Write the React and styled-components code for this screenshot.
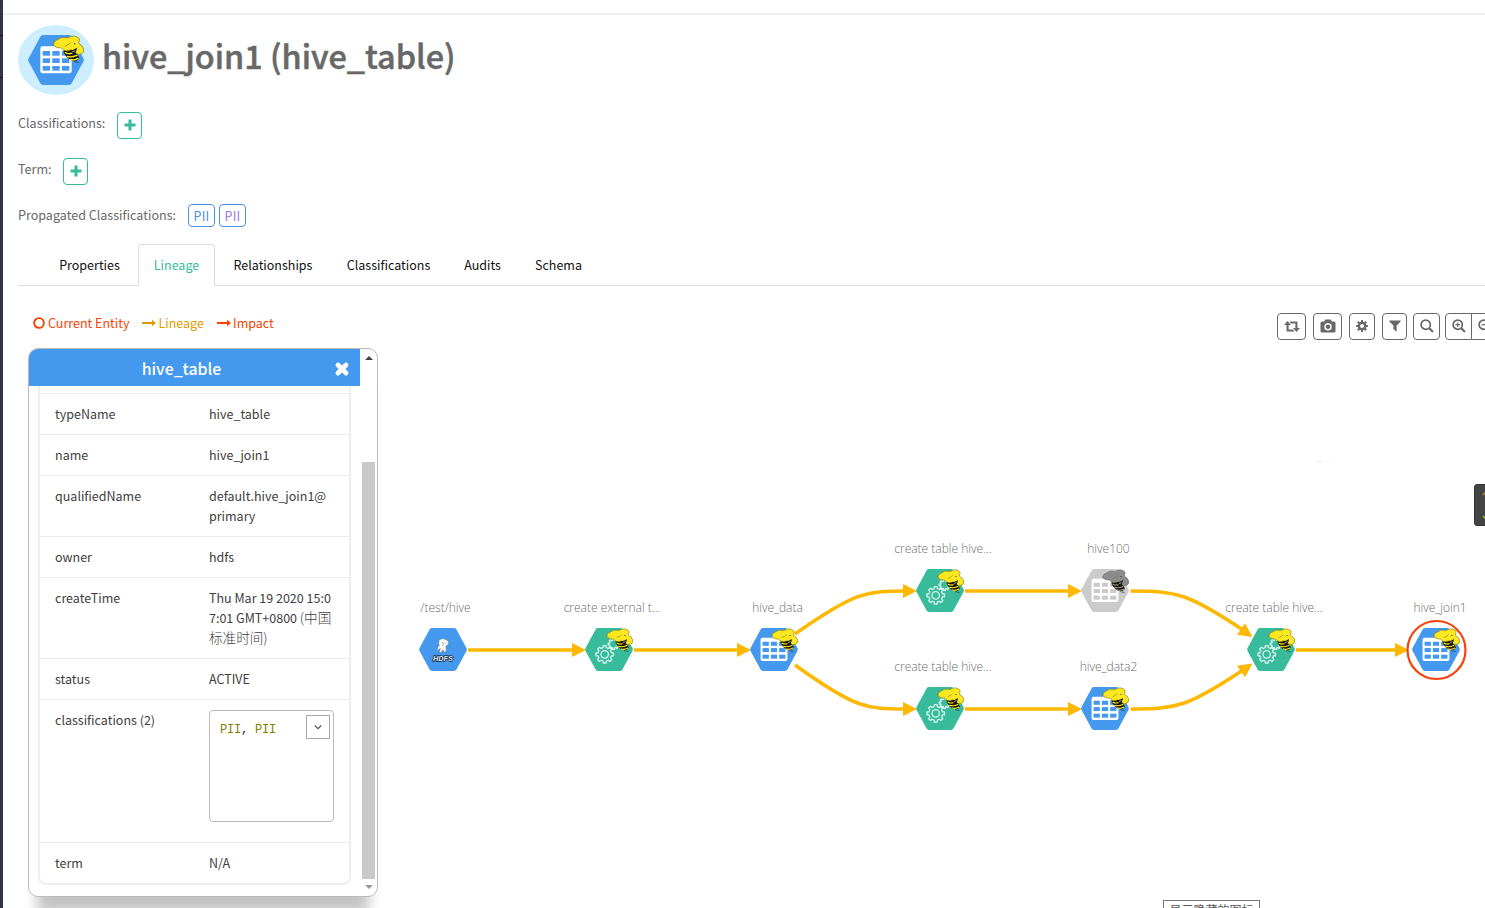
import React from 'react';
import styled, { createGlobalStyle, css } from 'styled-components';

const sans = `"Noto Sans CJK SC", "Noto Sans", sans-serif`;
const light = `"Open Sans", "Noto Sans", sans-serif`;

const GlobalStyle = createGlobalStyle`
  *, *::before, *::after { box-sizing: border-box; }
  body { margin: 0; background: #fff; overflow: hidden; }
`;

const Page = styled.div`
  position: relative;
  display: flex;
  width: 1485px;
  height: 908px;
  overflow: hidden;
  background: #fff;
  font: 13px/20px ${sans};
  color: #686868;
`;
const Sidebar = styled.div`
  flex: none;
  width: 3px;
  background: linear-gradient(#323544 35px, #15161d 35px 36px, #323544 36px 77px, #15161d 77px 78px, #323544 78px);
`;
const Main = styled.main`
  flex: 1;
  min-width: 0;
  display: flex;
  flex-direction: column;
  padding-top: 13px;
`;
const TopRule = styled.div`
  height: 2px;
  background: #eee;
`;
const Header = styled.header`
  display: flex;
  height: 80px;
  padding: 10px 0 0 15px;
`;
const EntityBadge = styled.div`
  display: flex;
  align-items: center;
  justify-content: center;
  width: 76px;
  height: 70px;
  border-radius: 50%;
  background: #cef;
`;
const Title = styled.h1`
  margin: 5px 0 0 8px;
  font: 500 32.4px/50px ${sans};
  -webkit-text-stroke: 0.5px #686868;
  color: #686868;
  white-space: nowrap;
`;
const TagRow = styled.div`
  display: flex;
  align-items: flex-start;
  height: 46px;
  padding: 17px 0 0 15px;
`;
const TagLabel = styled.span`
  width: ${p => p.$w}px;
  height: 20px;
  margin-top: 1px;
  line-height: 20px;
  font-size: 12.55px;
  white-space: nowrap;
`;
const AddButton = styled.button`
  display: flex;
  align-items: center;
  justify-content: center;
  width: 25px;
  height: 27px;
  padding: 0 0 2px 1px;
  border: 1px solid #37bb9b;
  border-radius: 4px;
  background: #fff;
`;
const Tag = styled.span`
  display: flex;
  align-items: center;
  justify-content: center;
  width: 27px;
  height: 23px;
  margin-right: 4px;
  border: 1px solid #4a90e2;
  border-radius: 4px;
  font-size: 12.5px;
  letter-spacing: 0.3px;
  color: ${p => p.$color};
`;
const Tabs = styled.nav`
  display: flex;
  height: 42px;
  margin: 11px 0 0 15px;
  padding-left: 25px;
  border-bottom: 1px solid #ddd;
`;
const Tab = styled.a`
  flex: none;
  width: ${p => p.$w}px;
  height: 42px;
  margin-right: 2px;
  border: 1px solid transparent;
  border-radius: 4px 4px 0 0;
  text-align: center;
  line-height: 39px;
  font-size: 12.5px;
  white-space: nowrap;
  color: #111;
  ${p => p.$active && css`
    color: #37bb9b;
    background: #fff;
    border-color: #ddd #ddd #fff;
  `}
`;
const LineageBar = styled.div`
  display: flex;
  justify-content: space-between;
  align-items: flex-start;
  height: 62px;
  padding: 27px 0 0 30px;
`;
const Legend = styled.div`
  display: flex;
`;
const LegendItem = styled.span`
  display: flex;
  align-items: center;
  height: 20px;
  width: ${p => p.$w}px;
  gap: ${p => p.$gap || 3}px;
  font-size: 12.5px;
  white-space: nowrap;
  color: ${p => p.$color};
`;
const Toolbar = styled.div`
  display: flex;
  width: 208px;
  overflow: hidden;
`;
const ToolButton = styled.button`
  flex: none;
  display: flex;
  align-items: center;
  justify-content: center;
  width: ${p => p.$w}px;
  height: 27px;
  margin-right: ${p => p.$gap}px;
  padding: 0 0 1px;
  border: 1px solid #686868;
  border-radius: ${p => p.$radius || '4px'};
  background: #fff;
  color: #686868;
`;
const Workspace = styled.section`
  display: flex;
  height: 560px;
  padding-left: 25px;
`;
const Panel = styled.aside`
  flex: none;
  display: flex;
  width: 350px;
  height: 549px;
  border: 1px solid #bbb;
  border-radius: 10px;
  overflow: hidden;
  background: #fff;
  box-shadow: 0 25px 13px -9px #c4c4c4;
`;
const PanelMain = styled.div`
  width: 331px;
`;
const PanelHeader = styled.div`
  display: flex;
  align-items: center;
  height: 37px;
  padding: 2px 10px 0 0;
  background: #4499ee;
  color: #fff;
  font: 500 15.9px/37px ${sans};
`;
const PanelTitle = styled.span`
  flex: 1;
  text-align: center;
  white-space: nowrap;
`;
const Details = styled.div`
  width: 313px;
  height: 499px;
  margin-left: 9px;
  padding-top: 7px;
  border: 2px solid #eee;
  border-top: 0;
  border-radius: 0 0 8px 8px;
`;
const DetailRow = styled.div`
  display: flex;
  height: ${p => p.$h}px;
  padding: 10px 15px 0;
  border-top: 1px solid #ebebeb;
  font-size: 12.5px;
  color: #404040;
`;
const DetailKey = styled.div`
  flex: none;
  width: 154px;
`;
const DetailValue = styled.div`
  flex: none;
  width: 124px;
  word-break: break-all;
`;
const Cjk = styled.span`
  font-weight: 300;
  font-size: 13.6px;
  line-height: 1;
`;
const CodeBox = styled.div`
  display: flex;
  justify-content: space-between;
  width: 125px;
  height: 112px;
  padding: 4px 3px 0 10px;
  border: 1px solid #bbb;
  border-radius: 4px;
  font: 12px/31px "Liberation Mono", monospace;
  letter-spacing: -0.2px;
  color: #222;
  white-space: pre;
`;
const CodeTag = styled.span`
  color: #808000;
`;
const Expander = styled.span`
  display: flex;
  align-items: center;
  justify-content: center;
  width: 24px;
  height: 24px;
  border: 1px solid #aaa;
`;
const Scrollbar = styled.div`
  display: flex;
  flex-direction: column;
  align-items: center;
  justify-content: space-between;
  width: 17px;
  padding: 6px 0 6px;
`;
const Thumb = styled.div`
  width: 13px;
  height: 417px;
  margin-top: 96px;
  background: #c9c9c9;
`;
const Canvas = styled.div`
  position: relative;
  flex: 1;
  min-width: 0;
  overflow: hidden;
`;
const Edges = styled.svg`
  display: block;
  width: 1107px;
  height: 560px;
`;
const Node = styled.div`
  position: absolute;
  left: ${p => p.$x - 378 - 70}px;
  top: ${p => p.$y - 348 - 53}px;
  width: 140px;
  height: 75px;
  display: flex;
  flex-direction: column;
  align-items: center;
`;
const NodeLabel = styled.span`
  height: 31px;
  padding-left: ${p => p.$shift}px;
  font: 300 12px/22px ${light};
  color: #6c6c6c;
  white-space: nowrap;
`;
const SideTip = styled.div`
  position: absolute;
  right: -6px;
  top: 484px;
  width: 17px;
  height: 42px;
  border: 1px solid #333;
  border-radius: 3px;
  background: #444;
`;
const TrayTip = styled.div`
  position: absolute;
  left: 1163px;
  top: 900px;
  width: 97px;
  height: 20px;
  border: 1px solid #767676;
  background: #fff;
  text-align: center;
  font: 12px/17px ${sans};
  color: #575757;
  white-space: nowrap;
`;

const Elephant = ({ gray }) => {
  const body = gray ? '#8c8c8c' : '#fbe821';
  return (
    <g strokeLinejoin="round" strokeLinecap="round">
      <path d="M106 40H146L146 54L154 68L146 77L130 76Q114 68 108 54Z" fill="#1c1808" />
      <path d="M112 53Q121 58 132 54M118 64Q129 68 147 61M128 73Q138 77 150 70" fill="none" stroke={body} strokeWidth="4" />
      <path d="M138 79L151 82" stroke="#222" strokeWidth="2" />
      <path
        d="M76 27Q80 15 91 13Q99 5 112 8Q121 10 128 4Q141 1 149 7Q157 10 154 17Q151 21 153 26Q164 31 167 42Q168 56 158 57Q151 61 144 55L138 47Q130 44 124 46Q114 50 107 45Q100 36 91 38Q77 36 76 27Z"
        fill={body}
        stroke={gray ? '#666' : '#7d700f'}
        strokeWidth="2"
      />
      <path d="M112 33Q121 31 127 24" fill="none" stroke={gray ? '#666' : '#8b7d10'} strokeWidth="2" />
      <path d="M127 46Q136 46 147 38Q146 48 141 55Q134 56 128 52Z" fill="#16130a" />
      <path d="M134 50L141 48" stroke="#fff" strokeWidth="2" />
      <circle cx="140" cy="26" r="2" fill="#222" />
    </g>
  );
};

const gearPath = (cx, cy, outer, inner, teeth) => {
  const step = (Math.PI * 2) / teeth;
  const points = [];
  for (let i = 0; i < teeth; i += 1) {
    [[-0.3, inner], [-0.2, outer], [0.2, outer], [0.3, inner]].forEach(([t, r]) => {
      const a = (i + t) * step;
      points.push(`${(cx + r * Math.cos(a)).toFixed(1)} ${(cy + r * Math.sin(a)).toFixed(1)}`);
    });
  }
  return `M${points.join('L')}Z`;
};

const hexFill = { table: '#4499ee', process: '#37bb9b', hdfs: '#4499ee', deleted: '#cbcbcb' };

const EntityIcon = ({ kind, width = 48, height = 43 }) => (
  <svg width={width} height={height} viewBox="0 0 168 150" preserveAspectRatio="none">
    <path
      d="M45 0H123Q128 0 131 5L166 70Q169 75 166 80L131 145Q128 150 123 150H45Q40 150 37 145L2 80Q-1 75 2 70L37 5Q40 0 45 0Z"
      fill={hexFill[kind]}
    />
    {(kind === 'table' || kind === 'deleted') && (
      <>
        <rect x="37" y="34" width="94" height="81" rx="7" fill="#fff" />
        {[48, 70, 93].map(y =>
          [44, 73, 102].map(x => <rect key={`${x}-${y}`} x={x} y={y} width="22" height="14" fill={hexFill[kind]} />)
        )}
      </>
    )}
    {kind === 'process' && (
      <g fill="none" stroke="#d9f7ee" strokeWidth="4.500" strokeLinejoin="round">
        <path d={gearPath(69, 92, 31, 24, 8)} />
        <circle cx="69" cy="92" r="13" />
        <path d={gearPath(100, 56, 19, 14, 8)} />
      </g>
    )}
    {kind === 'hdfs' && (
      <>
        <path
          d="M70 47Q67 40 76 39Q84 34 94 41Q104 42 104 53Q102 62 94 63L96 79L89 85L83 76L78 87L70 82L75 72L61 79L66 67L71 60Q65 54 70 47Z"
          fill="#fff"
          stroke="#5c6d80"
          strokeWidth="2"
        />
        <path d="M82 49Q88 54 83 62M95 50V54" fill="none" stroke="#5d6d80" strokeWidth="2.500" />
        <text
          x="84" y="114" textAnchor="middle" textLength="70" lengthAdjust="spacingAndGlyphs"
          fontFamily="Liberation Sans, sans-serif" fontWeight="700" fontStyle="italic" fontSize="24"
          fill="#dde4ec" stroke="#1c3049" strokeWidth="5" paintOrder="stroke"
        >
          HDFS
        </text>
      </>
    )}
    {kind !== 'hdfs' && <Elephant gray={kind === 'deleted'} />}
  </svg>
);

const PlusIcon = () => (
  <svg width="12" height="12" viewBox="0 0 12 12">
    <path d="M4.500 .5h3v4h4v3h-4v4h-3v-4h-4v-3h4z" fill="#37bb9b" />
  </svg>
);
const ArrowIcon = () => (
  <svg width="14" height="8" viewBox="0 0 14 8">
    <path d="M0 3h10V.8L14 4 10 7.200V5H0z" fill="currentColor" />
  </svg>
);

const edgeList = [
  'M468 650H574', 'M634 650H739', 'M795 634C856 591 867 591 906 591', 'M795 665C856 709 867 709 906 709',
  'M965 591H1070', 'M965 709H1070', 'M1130.500 591C1178 591 1189 594 1243 630', 'M1130.500 709C1178 709 1189 706 1243 670',
  'M1296 650H1398',
];
const heads = [[586, 650, 0], [751, 650, 0], [917, 591, 0], [917, 709, 0], [1082, 591, 0], [1082, 709, 0], [1252.5, 637, 35], [1252.5, 663.5, -35], [1409, 650, 0]];
const nodes = [
  { x: 443, y: 650, kind: 'hdfs', label: '/test/hive', shift: 5 },
  { x: 608.5, y: 650, kind: 'process', label: 'create external t...', shift: 7 },
  { x: 774, y: 650, kind: 'table', label: 'hive_data', shift: 7 },
  { x: 939.5, y: 591, kind: 'process', label: 'create table hive...', shift: 7 },
  { x: 939.5, y: 709, kind: 'process', label: 'create table hive...', shift: 7 },
  { x: 1105, y: 591, kind: 'deleted', label: 'hive100', shift: 7 },
  { x: 1105, y: 709, kind: 'table', label: 'hive_data2', shift: 7 },
  { x: 1270.5, y: 650, kind: 'process', label: 'create table hive...', shift: 7 },
  { x: 1436, y: 649.5, kind: 'table', label: 'hive_join1', shift: 8 },
];
const tabs = [['Properties', 93], ['Lineage', 77], ['Relationships', 112], ['Classifications', 115], ['Audits', 69], ['Schema', 79]];
const details = [
  ['typeName', 'hive_table', 41],
  ['name', 'hive_join1', 41],
  ['qualifiedName', 'default.hive_join1@primary', 61],
  ['owner', 'hdfs', 41],
  ['createTime', <>Thu Mar 19 2020 15:07:01 GMT+0800 <Cjk>(中国标准时间)</Cjk></>, 81],
  ['status', 'ACTIVE', 41],
  ['classifications (2)', null, 143],
  ['term', 'N/A', 41],
];

const Magnifier = ({ sign }) => (
  <svg width="14" height="14" viewBox="0 0 14 14" fill="none" stroke="currentColor">
    <circle cx="5.700" cy="5.700" r="4.600" strokeWidth="1.700" />
    <path d="M9 9L13 13" strokeWidth="2.200" />
    {sign && <path d={sign === '+' ? 'M3.500 5.700h4.400M5.700 3.500v4.400' : 'M3.500 5.700h4.400'} strokeWidth="1.200" />}
  </svg>
);

const Controls = () => (
  <Toolbar>
    <ToolButton $w={29} $gap={7} aria-label="Reset">
      <svg width="16" height="11" viewBox="0 0 16 11" fill="currentColor">
        <path d="M3.500 0L7 4H4.600V8.500H9L10.500 10.500H3.300Q2.500 10.500 2.500 9.600V4H0ZM12.500 11L9 7H11.400V2.500H7L5.500 .5H12.700Q13.500 .5 13.500 1.400V7H16Z" />
      </svg>
    </ToolButton>
    <ToolButton $w={29} $gap={7} aria-label="Screenshot">
      <svg width="16" height="14" viewBox="0 0 16 14">
        <path d="M2 2.500H4.200L5.200 .5H10.800L11.800 2.500H14Q15.500 2.500 15.500 4V12Q15.500 13.500 14 13.500H2Q.5 13.500 .5 12V4Q.5 2.500 2 2.500Z" fill="currentColor" />
        <circle cx="8" cy="7.700" r="3" fill="none" stroke="#fff" strokeWidth="1.500" />
      </svg>
    </ToolButton>
    <ToolButton $w={26} $gap={7} aria-label="Settings">
      <svg width="12" height="12" viewBox="0 0 12 12">
        <path d={`${gearPath(6, 6, 6, 4.3, 8)}M8 6A2 2 0 1 0 4 6A2 2 0 1 0 8 6Z`} fill="currentColor" fillRule="evenodd" />
      </svg>
    </ToolButton>
    <ToolButton $w={25} $gap={6} aria-label="Filter">
      <svg width="12" height="12" viewBox="0 0 12 12"><path d="M.4 .5H11.600V1.500L7.600 5.600V11.700L4.400 9V5.600L.4 1.500Z" fill="currentColor" /></svg>
    </ToolButton>
    <ToolButton $w={27} $gap={5} aria-label="Search"><Magnifier /></ToolButton>
    <ToolButton $w={27} $gap={-1} $radius="4px 0 0 4px" aria-label="Zoom in"><Magnifier sign="+" /></ToolButton>
    <ToolButton $w={27} $gap={0} $radius="0 4px 4px 0" aria-label="Zoom out"><Magnifier sign="-" /></ToolButton>
  </Toolbar>
);

export default function App() {
  return (
    <>
      <GlobalStyle />
      <Page>
        <Sidebar />
        <Main>
          <TopRule />
          <Header>
            <EntityBadge><EntityIcon kind="table" width={56} height={50} /></EntityBadge>
            <Title>hive_join1 (hive_table)</Title>
          </Header>
          <TagRow>
            <TagLabel $w={99}>Classifications:</TagLabel>
            <AddButton aria-label="Add classification"><PlusIcon /></AddButton>
          </TagRow>
          <TagRow>
            <TagLabel $w={45}>Term:</TagLabel>
            <AddButton aria-label="Add term"><PlusIcon /></AddButton>
          </TagRow>
          <TagRow>
            <TagLabel $w={170}>Propagated Classifications:</TagLabel>
            <Tag $color="#4a90e2">PII</Tag>
            <Tag $color="#a07be8">PII</Tag>
          </TagRow>
          <Tabs>
            {tabs.map(([name, w]) => <Tab key={name} $w={w} $active={name === 'Lineage'}>{name}</Tab>)}
          </Tabs>
          <LineageBar>
            <Legend>
              <LegendItem $color="#fb4200" $w={109}>
                <svg width="12" height="12" viewBox="0 0 12 12"><circle cx="6" cy="6" r="4.900" fill="none" stroke="currentColor" strokeWidth="1.900" /></svg>
                Current Entity
              </LegendItem>
              <LegendItem $color="#df9b00" $w={75} $gap={2.5}><ArrowIcon />Lineage</LegendItem>
              <LegendItem $color="#fb4200" $w={60} $gap={2}><ArrowIcon />Impact</LegendItem>
            </Legend>
            <Controls />
          </LineageBar>
          <Workspace>
            <Panel>
              <PanelMain>
                <PanelHeader>
                  <PanelTitle>hive_table</PanelTitle>
                  <svg width="16" height="16" viewBox="0 0 16 16"><path d="M4 4L12 12M12 4L4 12" stroke="#fff" strokeWidth="4.800" strokeLinecap="round" /></svg>
                </PanelHeader>
                <Details>
                  {details.map(([key, value, h]) => (
                    <DetailRow key={key} $h={h}>
                      <DetailKey>{key}</DetailKey>
                      <DetailValue>
                        {value || (
                          <CodeBox>
                            <span><CodeTag>PII</CodeTag>, <CodeTag>PII</CodeTag></span>
                            <Expander>
                              <svg width="8" height="5" viewBox="0 0 8 5"><path d="M.8 .5L4 3.700L7.200 .5" fill="none" stroke="#555" strokeWidth="1.200" /></svg>
                            </Expander>
                          </CodeBox>
                        )}
                      </DetailValue>
                    </DetailRow>
                  ))}
                </Details>
              </PanelMain>
              <Scrollbar>
                <svg width="8" height="5" viewBox="0 0 8 5"><path d="M0 5L4 1L8 5Z" fill="#444" /></svg>
                <Thumb />
                <svg width="8" height="5" viewBox="0 0 8 5"><path d="M0 0L4 4L8 0Z" fill="#999" /></svg>
              </Scrollbar>
            </Panel>
            <Canvas>
              <Edges viewBox="378 348 1107 560">
                {edgeList.map(d => <path key={d} d={d} fill="none" stroke="#ffb800" strokeWidth="3.500" />)}
                {heads.map(([x, y, a]) => <path key={`${x}-${y}`} d="M0 0L-14 -7V7Z" transform={`translate(${x} ${y}) rotate(${a})`} fill="#ffb800" />)}
                <circle cx="1436.500" cy="650" r="29" fill="#fff" stroke="#f9420b" strokeWidth="2.200" />
                <path d="M1317 461.500h4l2 1M1327 462h2" fill="none" stroke="#ededed" />
              </Edges>
              {nodes.map(n => (
                <Node key={`${n.x}-${n.y}`} $x={n.x} $y={n.y}>
                  <NodeLabel $shift={n.shift}>{n.label}</NodeLabel>
                  <EntityIcon kind={n.kind} />
                </Node>
              ))}
            </Canvas>
          </Workspace>
        </Main>
        <SideTip>
          <svg width="15" height="40" viewBox="0 0 15 40" fill="none" strokeWidth="1.500">
            <path d="M8 10L11 7" stroke="#d38b20" />
            <path d="M8 31L11 34" stroke="#7fd320" />
          </svg>
        </SideTip>
        <TrayTip>显示隐藏的图标</TrayTip>
      </Page>
    </>
  );
}
